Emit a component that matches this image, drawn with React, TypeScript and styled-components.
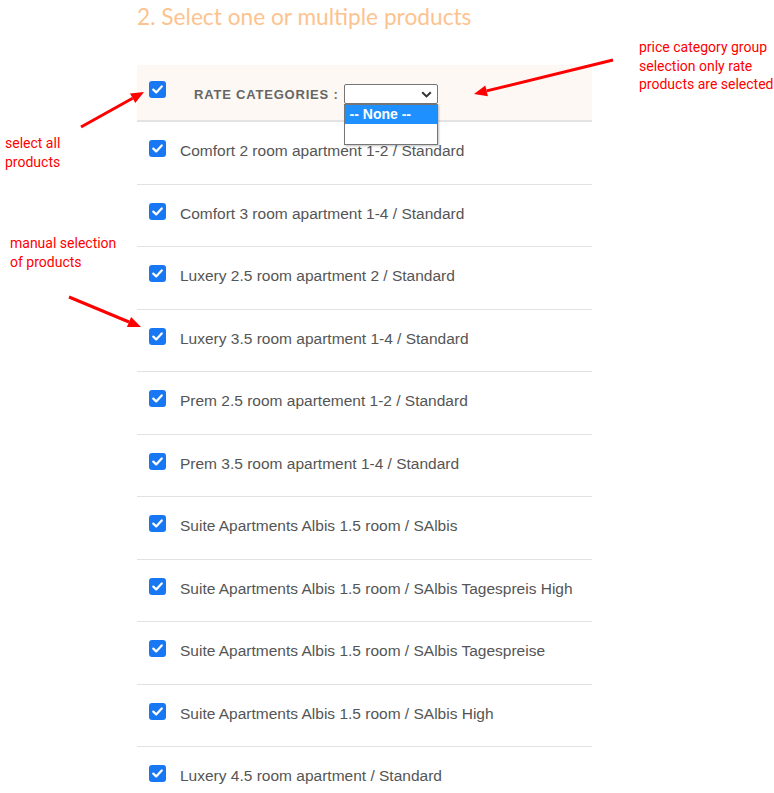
import React from 'react';
import styled, { createGlobalStyle } from 'styled-components';

const GlobalStyle = createGlobalStyle`
    html, body {
        margin: 0;
        padding: 0;
        background: #ffffff;
    }
    body {
        width: 774px;
        height: 793px;
        overflow: hidden;
        font-family: "Liberation Sans", Arial, sans-serif;
    }
`;

const products = [
    'Comfort 2 room apartment 1-2 / Standard',
    'Comfort 3 room apartment 1-4 / Standard',
    'Luxery 2.5 room apartment 2 / Standard',
    'Luxery 3.5 room apartment 1-4 / Standard',
    'Prem 2.5 room apartement 1-2 / Standard',
    'Prem 3.5 room apartment 1-4 / Standard',
    'Suite Apartments Albis 1.5 room / SAlbis',
    'Suite Apartments Albis 1.5 room / SAlbis Tagespreis High',
    'Suite Apartments Albis 1.5 room / SAlbis Tagespreise',
    'Suite Apartments Albis 1.5 room / SAlbis High',
    'Luxery 4.5 room apartment / Standard',
];

const Page = styled.div`
    position: relative;
    width: 774px;
    height: 793px;
    overflow: hidden;
`;

const Section = styled.div`
    margin-left: 137px;
    width: 455px;
`;

const Title = styled.h2`
    margin: 0;
    padding-top: 3px;
    height: 65px;
    box-sizing: border-box;
    font-family: Lato, "Open Sans", sans-serif;
    font-weight: 400;
    font-size: 22.7px;
    line-height: 28px;
    color: #fdc38f;
`;

const HeaderRow = styled.div`
    height: 57px;
    background: #fdf8f4;
    border-bottom: 2px solid #e3e3e3;
    display: flex;
    align-items: flex-start;
    padding: 18px 0 0 12px;
    box-sizing: border-box;
`;

const HeaderBox = styled.div`
    margin-top: -2px;
`;

const HeaderLabel = styled.span`
    margin-left: 28px;
    margin-top: 4px;
    font-size: 13px;
    font-weight: bold;
    letter-spacing: 0.8px;
    color: #666666;
    line-height: 16px;
`;

const SelectWrap = styled.div`
    position: relative;
    margin-left: 5px;
    margin-top: 1px;
`;

const SelectBox = styled.div`
    width: 94px;
    height: 20px;
    box-sizing: border-box;
    border: 1px solid #767676;
    border-radius: 2px;
    background: #ffffff;
    display: flex;
    align-items: center;
    justify-content: flex-end;
    padding-right: 5px;
`;

const DropList = styled.div`
    position: absolute;
    top: 20px;
    left: 0;
    width: 94px;
    height: 41px;
    box-sizing: border-box;
    border: 1px solid #767676;
    background: #ffffff;
    box-shadow: 1px 1px 2px rgba(0, 0, 0, 0.25);
    z-index: 2;
`;

const Option = styled.div<{ $active?: boolean }>`
    height: 19px;
    padding-left: 5px;
    font-size: 14px;
    font-weight: bold;
    line-height: 19px;
    color: ${(p) => (p.$active ? '#ffffff' : '#000000')};
    background: ${(p) => (p.$active ? '#1e90ff' : 'transparent')};
`;

const Row = styled.div`
    height: 62.55px;
    box-sizing: border-box;
    border-bottom: 1px solid #e2e2e2;
    display: flex;
    align-items: flex-start;
    padding: 18px 0 0 12px;
`;

const RowLabel = styled.span`
    margin-left: 14px;
    margin-top: 2px;
    font-size: 15.5px;
    line-height: 18px;
    color: #555555;
`;

const Box = styled.span`
    flex: none;
    width: 17px;
    height: 17px;
    border-radius: 3px;
    background: #1877f2;
    display: flex;
    align-items: center;
    justify-content: center;
`;

const Note = styled.div<{ $x: number; $y: number }>`
    position: absolute;
    left: ${(p) => p.$x}px;
    top: ${(p) => p.$y}px;
    font-family: Roboto, "Liberation Sans", sans-serif;
    font-size: 14px;
    line-height: 18.5px;
    color: #ff0000;
    white-space: nowrap;
`;

const Overlay = styled.svg`
    position: absolute;
    left: 0;
    top: 0;
    pointer-events: none;
`;

const Check = () => (
    <Box>
        <svg width="11" height="9" viewBox="0 0 11 9">
            <path d="M1.3 4.6 L4.2 7.4 L9.7 1.4" fill="none" stroke="#fff" strokeWidth="2.2" strokeLinecap="round" strokeLinejoin="round" />
        </svg>
    </Box>
);

const Chevron = () => (
    <svg width="11" height="7" viewBox="0 0 11 7">
        <path d="M1.2 1.2 L5.5 5.4 L9.8 1.2" fill="none" stroke="#333" strokeWidth="2" />
    </svg>
);

const Arrow = ({ x1, y1, x2, y2 }: { x1: number; y1: number; x2: number; y2: number }) => {
    const a = Math.atan2(y2 - y1, x2 - x1);
    const len = 13;
    const w = 5.5;
    const bx = x2 - Math.cos(a) * len;
    const by = y2 - Math.sin(a) * len;
    const px = -Math.sin(a) * w;
    const py = Math.cos(a) * w;
    return (
        <g>
            <line x1={x1} y1={y1} x2={bx} y2={by} stroke="#ff0000" strokeWidth="3" />
            <polygon points={`${x2},${y2} ${bx + px},${by + py} ${bx - px},${by - py}`} fill="#ff0000" />
        </g>
    );
};

export default function App() {
    return (
        <Page>
            <GlobalStyle />
            <Section>
                <Title>2. Select one or multiple products</Title>
                <HeaderRow>
                    <HeaderBox>
                        <Check />
                    </HeaderBox>
                    <HeaderLabel>RATE CATEGORIES :</HeaderLabel>
                    <SelectWrap>
                        <SelectBox>
                            <Chevron />
                        </SelectBox>
                        <DropList>
                            <Option $active>-- None --</Option>
                            <Option />
                        </DropList>
                    </SelectWrap>
                </HeaderRow>
                {products.map((name) => (
                    <Row key={name}>
                        <Check />
                        <RowLabel>{name}</RowLabel>
                    </Row>
                ))}
            </Section>

            <Note $x={639} $y={38}>
                price category group
                <br />
                selection only rate
                <br />
                products are selected
            </Note>
            <Note $x={5} $y={134}>
                select all
                <br />
                products
            </Note>
            <Note $x={10} $y={234}>
                manual selection
                <br />
                of products
            </Note>

            <Overlay width="774" height="793">
                <Arrow x1={613} y1={60} x2={474} y2={94} />
                <Arrow x1={81} y1={127} x2={144} y2={92} />
                <Arrow x1={69} y1={297} x2={141} y2={327} />
            </Overlay>
        </Page>
    );
}
